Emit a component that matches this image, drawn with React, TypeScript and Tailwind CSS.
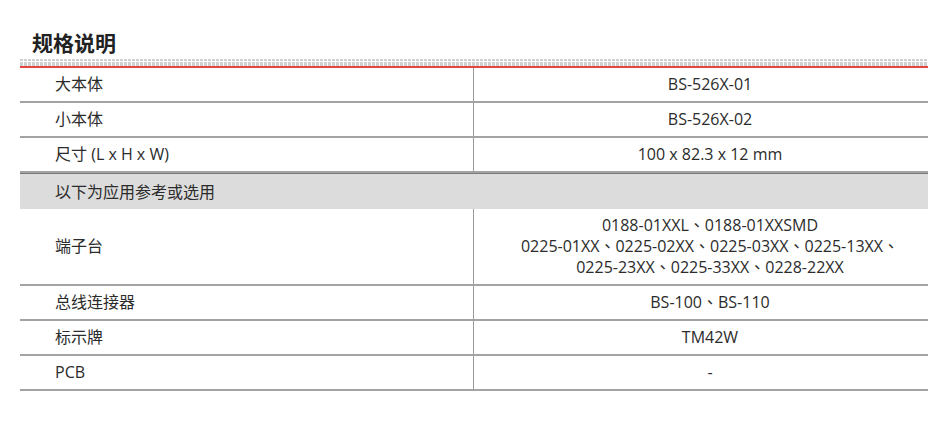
type SpecRow = {
  label: string;
  value: string[];
};

const specs: SpecRow[] = [
  { label: '大本体', value: ['BS-526X-01'] },
  { label: '小本体', value: ['BS-526X-02'] },
  { label: '尺寸 (L x H x W)', value: ['100 x 82.3 x 12 mm'] },
];

const options: SpecRow[] = [
  {
    label: '端子台',
    value: [
      '0188-01XXL、0188-01XXSMD',
      '0225-01XX、0225-02XX、0225-03XX、0225-13XX、',
      '0225-23XX、0225-33XX、0228-22XX',
    ],
  },
  { label: '总线连接器', value: ['BS-100、BS-110'] },
  { label: '标示牌', value: ['TM42W'] },
  { label: 'PCB', value: ['-'] },
];

const Row = ({ row }: { row: SpecRow }) => (
  <div className="grid grid-cols-[454px_1fr] border-b-2 border-[#a3a3a3] leading-[21px]">
    <div className="flex items-center border-r border-[#9a9a9a] pl-[35px]">{row.label}</div>
    <div className="flex flex-col items-center justify-center py-[6px] pl-[18px]">
      {row.value.map((line) => (
        <span key={line}>{line}</span>
      ))}
    </div>
  </div>
);

export default function App() {
  return (
    <div className="min-h-[441px] bg-white px-[20px] pt-[29px] font-['Open_Sans','Noto_Sans_CJK_TC',sans-serif] text-[16px] text-[#2b2b2b]">
      <h2 className="pl-[12px] font-['Noto_Sans_CJK_SC',sans-serif] text-[21px] font-bold leading-[27px] text-[#222]">
        规格说明
      </h2>
      <div className="mt-[3px] w-[908px]">
        <div className="h-[7px] bg-[repeating-linear-gradient(90deg,#cfcfcf_0_3px,transparent_3px_4px)]">
          <div className="h-[3px] border-b border-white"></div>
        </div>
        <div className="h-[2px] bg-[#e2463f]"></div>
        {specs.map((row) => (
          <Row key={row.label} row={row} />
        ))}
        <div className="flex h-[36px] items-center border-t border-[#7a7a7a] bg-[#dcdcdc] pl-[35px]">
          以下为应用参考或选用
        </div>
        {options.map((row) => (
          <Row key={row.label} row={row} />
        ))}
      </div>
    </div>
  );
}
